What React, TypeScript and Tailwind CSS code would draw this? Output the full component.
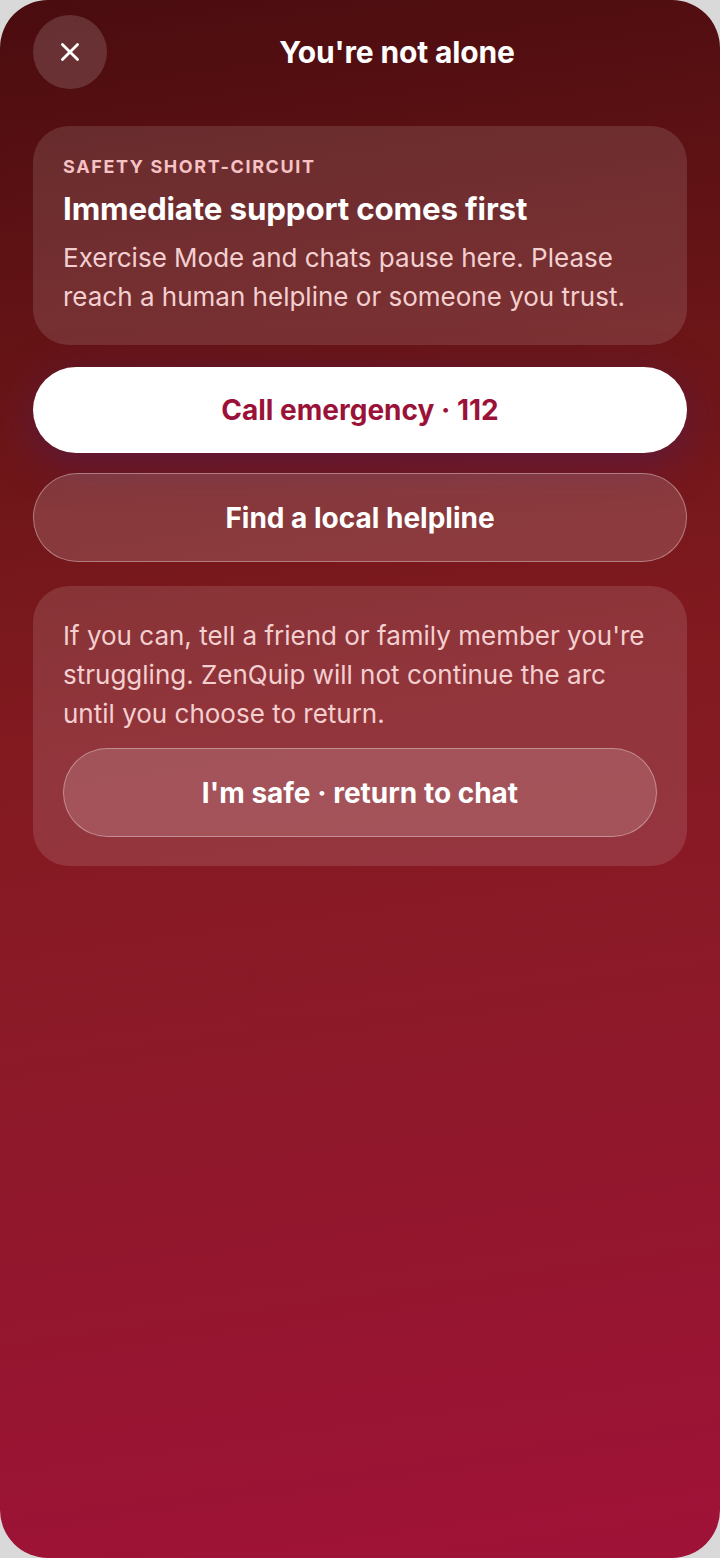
import React from "react";

export default function App() {
  return (
    <div className="w-[720px] h-[1558px] bg-[#d9d9d9]" style={{ fontFamily: "Inter, 'Noto Sans', sans-serif" }}>
      <div className="w-full h-full rounded-[48px] overflow-hidden bg-[linear-gradient(172deg,#4a0c0f_0%,#6a1517_25%,#821a20_45%,#8c1928_65%,#a01238_100%)] px-[33px] pt-[15px]">
        <div className="flex items-center h-[74px]">
          <button className="w-[74px] h-[74px] rounded-full bg-white/15 flex items-center justify-center shrink-0">
            <svg width="26" height="26" viewBox="0 0 24 24" fill="none" stroke="white" strokeWidth="2.6" strokeLinecap="round">
              <path d="M5 5L19 19M19 5L5 19" />
            </svg>
          </button>
          <div className="flex-1 text-center text-white font-bold text-[30px] tracking-[-0.005em]">You're not alone</div>
        </div>

        <div className="mt-[37px] rounded-[36px] bg-white/12 px-[30px] pt-[29px] pb-[29px]">
          <div className="text-[18px] font-bold tracking-[0.09em] text-[#f6c2c4] leading-[24px]">SAFETY SHORT-CIRCUIT</div>
          <div className="mt-[11px] text-[31.3px] font-bold text-white leading-[38px] tracking-[-0.005em]">Immediate support comes first</div>
          <div className="mt-[10px] text-[26px] text-[#f4cfd0] leading-[39px]">
            Exercise Mode and chats pause here. Please reach a human helpline or someone you trust.
          </div>
        </div>

        <button className="mt-[22px] w-full h-[86px] rounded-full bg-white text-[#9b1238] font-bold text-[28px] shadow-[0_10px_40px_rgba(80,30,90,0.55)]">
          Call emergency · 112
        </button>

        <button className="mt-[20px] w-full h-[89px] rounded-full bg-white/15 border border-white/35 text-white font-bold text-[28px]">
          Find a local helpline
        </button>

        <div className="mt-[24px] rounded-[36px] bg-white/12 px-[30px] pt-[30px] pb-[29px]">
          <div className="text-[26px] text-[#f4cfd0] leading-[39px]">
            If you can, tell a friend or family member you're struggling. ZenQuip will not continue the arc until you choose to return.
          </div>
          <button className="mt-[15px] w-full h-[89px] rounded-full bg-white/15 border border-white/35 text-white font-bold text-[28px]">
            I'm safe · return to chat
          </button>
        </div>
      </div>
    </div>
  );
}
